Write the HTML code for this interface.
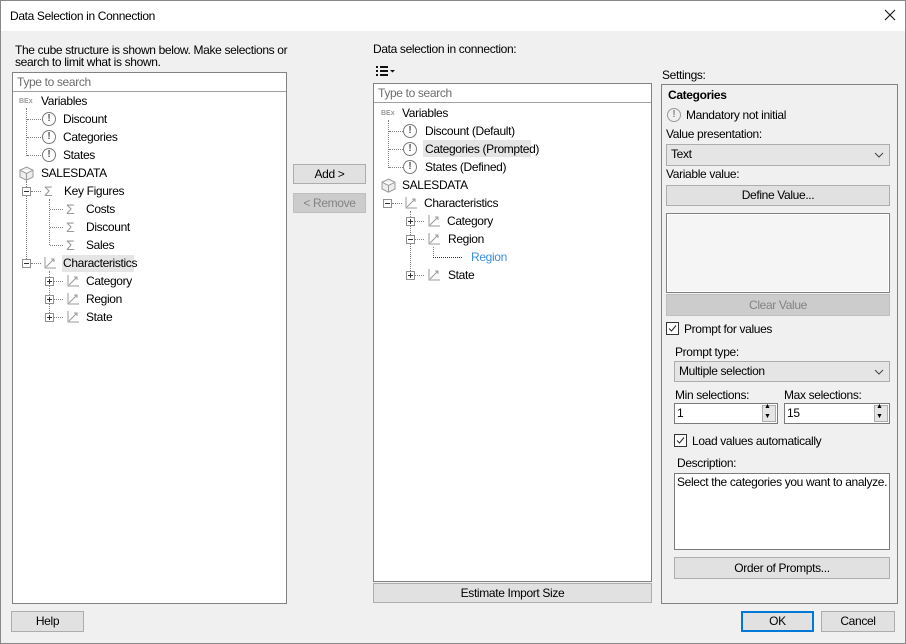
<!DOCTYPE html>
<html><head><meta charset="utf-8"><style>
*{box-sizing:border-box;margin:0;padding:0}
body{width:906px;height:644px;position:relative;background:#f0f0f0;font-family:"Liberation Sans",sans-serif;font-size:12px;letter-spacing:-0.35px;color:#000;overflow:hidden}
.a{position:absolute}
.t{position:absolute;line-height:14px;white-space:nowrap}
.box{position:absolute;background:#fff;border:1px solid #828282}
.btn{position:absolute;background:#e1e1e1;border:1px solid #adadad;text-align:center;line-height:18px}
.dis{background:#cccccc;border-color:#bfbfbf;color:#838383}
.combo{position:absolute;background:#e5e5e5;border:1px solid #adadad;line-height:19px;padding-left:4px}
.vd{position:absolute;border-left:1px dotted #808080;width:0}
.hd{position:absolute;border-top:1px dotted #808080;height:0}
.pm{position:absolute;width:9px;height:9px;border:1px solid #919191;background:#fff}
.pm:before{content:"";position:absolute;left:1px;top:3px;width:5px;height:1px;background:#333}
.pl:after{content:"";position:absolute;left:3px;top:1px;width:1px;height:5px;background:#333}
.w{position:absolute;width:14px;height:14px;border:1.3px solid #7a7a7a;border-radius:50%;font-size:10px;font-weight:bold;color:#555;text-align:center;line-height:11px;letter-spacing:0}
.sg{position:absolute;color:#999;font-size:14px;line-height:14px}
.bex{position:absolute;font-size:7px;color:#999;font-weight:bold;line-height:8px;letter-spacing:0}
.gray{color:#6d6d6d}
</style></head><body>
<div class="a" style="left:0;top:0;width:906px;height:644px;border:1px solid #888"></div>
<div class="a" style="left:1px;top:1px;width:904px;height:30px;background:#fff"></div>
<div class="t" style="left:10px;top:9px">Data Selection in Connection</div>
<svg class="a" style="left:884px;top:9px" width="12" height="12"><path d="M1 1L11 11M11 1L1 11" stroke="#111" stroke-width="1.1"/></svg>

<div class="t" style="left:15px;top:43px">The cube structure is shown below. Make selections or</div>
<div class="t" style="left:15px;top:55px">search to limit what is shown.</div>

<!-- left tree -->
<div class="box" style="left:12px;top:72px;width:275px;height:532px"></div>
<div class="a" style="left:13px;top:91px;width:273px;height:1px;background:#a0a0a0"></div>
<div class="t gray" style="left:17px;top:75px">Type to search</div>

<div class="bex" style="left:19px;top:98px">BEx</div>
<div class="t" style="left:41px;top:94px">Variables</div>
<div class="vd" style="left:26px;top:108px;height:48px"></div>
<div class="hd" style="left:27px;top:119px;width:14px"></div>
<div class="hd" style="left:27px;top:137px;width:14px"></div>
<div class="hd" style="left:27px;top:155px;width:14px"></div>
<div class="w" style="left:42px;top:112px">!</div><div class="t" style="left:63px;top:112px">Discount</div>
<div class="w" style="left:42px;top:130px">!</div><div class="t" style="left:63px;top:130px">Categories</div>
<div class="w" style="left:42px;top:148px">!</div><div class="t" style="left:63px;top:148px">States</div>
<svg class="a" style="left:19px;top:166px" width="15" height="15"><path d="M7.5 1L14 4.2V11L7.5 14.2L1 11V4.2Z M1 4.2L7.5 7.4L14 4.2 M7.5 7.4V14.2" fill="#eee" stroke="#9a9a9a"/></svg>
<div class="t" style="left:41px;top:166px">SALESDATA</div>
<div class="vd" style="left:26px;top:181px;height:82px"></div>
<div class="pm" style="left:22px;top:187px"></div><div class="hd" style="left:31px;top:191px;width:10px"></div>
<div class="sg" style="left:44px;top:184px">Σ</div><div class="t" style="left:64px;top:184px">Key Figures</div>
<div class="vd" style="left:49px;top:199px;height:46px"></div>
<div class="hd" style="left:50px;top:209px;width:13px"></div><div class="sg" style="left:66px;top:202px">Σ</div><div class="t" style="left:86px;top:202px">Costs</div>
<div class="hd" style="left:50px;top:227px;width:13px"></div><div class="sg" style="left:66px;top:220px">Σ</div><div class="t" style="left:86px;top:220px">Discount</div>
<div class="hd" style="left:50px;top:245px;width:13px"></div><div class="sg" style="left:66px;top:238px">Σ</div><div class="t" style="left:86px;top:238px">Sales</div>
<div class="pm" style="left:22px;top:259px"></div><div class="hd" style="left:31px;top:263px;width:10px"></div>
<svg class="a" style="left:43px;top:256px" width="14" height="14"><path d="M2 1V12H13 M3 11L11 3 M8 3H11V6" fill="none" stroke="#999"/></svg>
<div class="a" style="left:62px;top:255px;width:72px;height:17px;background:#e5e5e5"></div>
<div class="t" style="left:63px;top:256px">Characteristics</div>
<div class="vd" style="left:49px;top:271px;height:46px"></div>
<div class="pm pl" style="left:45px;top:277px"></div><div class="hd" style="left:54px;top:281px;width:9px"></div>
<svg class="a" style="left:66px;top:274px" width="14" height="14"><path d="M2 1V12H13 M3 11L11 3 M8 3H11V6" fill="none" stroke="#999"/></svg><div class="t" style="left:86px;top:274px">Category</div>
<div class="pm pl" style="left:45px;top:295px"></div><div class="hd" style="left:54px;top:299px;width:9px"></div>
<svg class="a" style="left:66px;top:292px" width="14" height="14"><path d="M2 1V12H13 M3 11L11 3 M8 3H11V6" fill="none" stroke="#999"/></svg><div class="t" style="left:86px;top:292px">Region</div>
<div class="pm pl" style="left:45px;top:313px"></div><div class="hd" style="left:54px;top:317px;width:9px"></div>
<svg class="a" style="left:66px;top:310px" width="14" height="14"><path d="M2 1V12H13 M3 11L11 3 M8 3H11V6" fill="none" stroke="#999"/></svg><div class="t" style="left:86px;top:310px">State</div>

<div class="btn" style="left:293px;top:164px;width:73px;height:20px">Add &gt;</div>
<div class="btn dis" style="left:293px;top:193px;width:73px;height:20px">&lt; Remove</div>

<!-- middle -->
<div class="t" style="left:373px;top:42px">Data selection in connection:</div>
<svg class="a" style="left:375px;top:65px" width="20" height="12"><path d="M1 1h2v2H1zM1 5h2v2H1zM1 9h2v2H1zM5 1h8v2H5zM5 5h8v2H5zM5 9h8v2H5zM15 5h5l-2.5 2.5z" fill="#111"/></svg>
<div class="box" style="left:373px;top:83px;width:279px;height:499px"></div>
<div class="a" style="left:374px;top:102px;width:277px;height:1px;background:#a0a0a0"></div>
<div class="t gray" style="left:378px;top:86px">Type to search</div>
<div class="bex" style="left:381px;top:110px">BEx</div>
<div class="t" style="left:402px;top:106px">Variables</div>
<div class="vd" style="left:388px;top:120px;height:48px"></div>
<div class="hd" style="left:389px;top:131px;width:14px"></div>
<div class="hd" style="left:389px;top:149px;width:14px"></div>
<div class="hd" style="left:389px;top:167px;width:14px"></div>
<div class="w" style="left:403px;top:124px">!</div><div class="t" style="left:425px;top:124px">Discount (Default)</div>
<div class="a" style="left:423px;top:140px;width:108px;height:17px;background:#e5e5e5"></div>
<div class="w" style="left:403px;top:142px">!</div><div class="t" style="left:425px;top:142px">Categories (Prompted)</div>
<div class="w" style="left:403px;top:160px">!</div><div class="t" style="left:425px;top:160px">States (Defined)</div>
<svg class="a" style="left:381px;top:178px" width="15" height="15"><path d="M7.5 1L14 4.2V11L7.5 14.2L1 11V4.2Z M1 4.2L7.5 7.4L14 4.2 M7.5 7.4V14.2" fill="#eee" stroke="#9a9a9a"/></svg>
<div class="t" style="left:402px;top:178px">SALESDATA</div>
<div class="pm" style="left:383px;top:199px"></div><div class="hd" style="left:392px;top:203px;width:10px"></div>
<svg class="a" style="left:404px;top:196px" width="14" height="14"><path d="M2 1V12H13 M3 11L11 3 M8 3H11V6" fill="none" stroke="#999"/></svg><div class="t" style="left:424px;top:196px">Characteristics</div>
<div class="vd" style="left:410px;top:211px;height:64px"></div>
<div class="pm pl" style="left:406px;top:217px"></div><div class="hd" style="left:415px;top:221px;width:9px"></div>
<svg class="a" style="left:427px;top:214px" width="14" height="14"><path d="M2 1V12H13 M3 11L11 3 M8 3H11V6" fill="none" stroke="#999"/></svg><div class="t" style="left:447px;top:214px">Category</div>
<div class="pm" style="left:406px;top:235px"></div><div class="hd" style="left:415px;top:239px;width:9px"></div>
<svg class="a" style="left:427px;top:232px" width="14" height="14"><path d="M2 1V12H13 M3 11L11 3 M8 3H11V6" fill="none" stroke="#999"/></svg><div class="t" style="left:448px;top:232px">Region</div>
<div class="vd" style="left:433px;top:247px;height:11px"></div><div class="hd" style="left:433px;top:257px;width:29px;border-top-color:#333"></div>
<div class="t" style="left:471px;top:250px;color:#3a8ee6">Region</div>
<div class="pm pl" style="left:406px;top:271px"></div><div class="hd" style="left:415px;top:275px;width:9px"></div>
<svg class="a" style="left:427px;top:268px" width="14" height="14"><path d="M2 1V12H13 M3 11L11 3 M8 3H11V6" fill="none" stroke="#999"/></svg><div class="t" style="left:448px;top:268px">State</div>
<div class="btn" style="left:373px;top:583px;width:279px;height:20px">Estimate Import Size</div>

<!-- settings -->
<div class="t" style="left:662px;top:68px">Settings:</div>
<div class="a" style="left:661px;top:84px;width:237px;height:520px;border:1px solid #828282"></div>
<div class="t" style="left:668px;top:88px;font-weight:bold">Categories</div>
<div class="w" style="left:667px;top:108px;border-color:#999;color:#888">!</div>
<div class="t" style="left:686px;top:108px">Mandatory not initial</div>
<div class="t" style="left:666px;top:127px">Value presentation:</div>
<div class="combo" style="left:666px;top:144px;width:224px;height:22px">Text</div>
<svg class="a" style="left:874px;top:152px" width="10" height="6"><path d="M1 1L5 5L9 1" fill="none" stroke="#444"/></svg>
<div class="t" style="left:666px;top:167px">Variable value:</div>
<div class="btn" style="left:666px;top:185px;width:224px;height:21px">Define Value...</div>
<div class="a" style="left:666px;top:213px;width:224px;height:80px;background:#f5f5f5;border:1px solid #828282;box-shadow:inset 0 0 0 1px #fff"></div>
<div class="btn dis" style="left:666px;top:294px;width:224px;height:22px;line-height:20px">Clear Value</div>
<div class="a" style="left:666px;top:322px;width:13px;height:13px;border:1px solid #333;background:#fff"></div>
<svg class="a" style="left:667px;top:323px" width="11" height="11"><path d="M2 5.5L4.5 8L9 2.5" fill="none" stroke="#222"/></svg>
<div class="t" style="left:684px;top:322px">Prompt for values</div>
<div class="t" style="left:675px;top:345px">Prompt type:</div>
<div class="combo" style="left:674px;top:361px;width:216px;height:21px">Multiple selection</div>
<svg class="a" style="left:874px;top:369px" width="10" height="6"><path d="M1 1L5 5L9 1" fill="none" stroke="#444"/></svg>
<div class="t" style="left:675px;top:388px">Min selections:</div>
<div class="t" style="left:784px;top:388px">Max selections:</div>
<div class="box" style="left:674px;top:403px;width:104px;height:21px;border-color:#7a7a7a"></div>
<div class="t" style="left:677px;top:406px">1</div>
<div class="a" style="left:762px;top:405px;width:14px;height:17px;background:#e5e5e5;border:1px solid #adadad"></div>
<div class="t" style="left:764px;top:402px;font-size:7px;line-height:10px">▲<br>▼</div>
<div class="box" style="left:784px;top:403px;width:106px;height:21px;border-color:#7a7a7a"></div>
<div class="t" style="left:787px;top:406px">15</div>
<div class="a" style="left:874px;top:405px;width:14px;height:17px;background:#e5e5e5;border:1px solid #adadad"></div>
<div class="t" style="left:876px;top:402px;font-size:7px;line-height:10px">▲<br>▼</div>
<div class="a" style="left:674px;top:434px;width:13px;height:13px;border:1px solid #333;background:#fff"></div>
<svg class="a" style="left:675px;top:435px" width="11" height="11"><path d="M2 5.5L4.5 8L9 2.5" fill="none" stroke="#222"/></svg>
<div class="t" style="left:692px;top:434px">Load values automatically</div>
<div class="t" style="left:677px;top:456px">Description:</div>
<div class="box" style="left:674px;top:473px;width:216px;height:77px;border-color:#7a7a7a"></div>
<div class="t" style="left:677px;top:475px">Select the categories you want to analyze.</div>
<div class="btn" style="left:674px;top:557px;width:216px;height:22px;line-height:20px">Order of Prompts...</div>

<div class="btn" style="left:11px;top:611px;width:73px;height:21px">Help</div>
<div class="btn" style="left:741px;top:611px;width:73px;height:21px;border:2px solid #0078d7;line-height:17px">OK</div>
<div class="btn" style="left:821px;top:611px;width:74px;height:21px">Cancel</div>
</body></html>
